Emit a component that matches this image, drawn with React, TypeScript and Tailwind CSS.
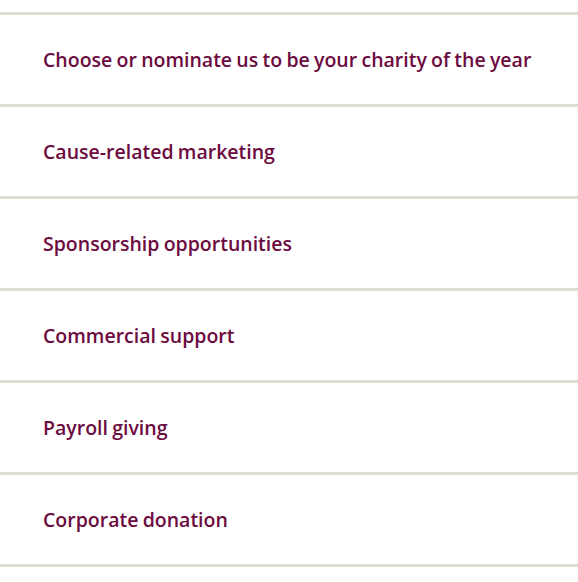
import React from 'react';

const items = [
  'Choose or nominate us to be your charity of the year',
  'Cause-related marketing',
  'Sponsorship opportunities',
  'Commercial support',
  'Payroll giving',
  'Corporate donation',
];

const App: React.FC = () => {
  return (
    <div className="min-h-screen bg-white pt-3" style={{ fontFamily: '"Open Sans", "Noto Sans", sans-serif' }}>
      <ul className="border-b-[3px] border-[#dddecd]">
        {items.map((item) => (
          <li key={item} className="border-t-[3px] border-[#dddecd]">
            <a href="#" className="flex h-[89px] items-center pl-[43px] pt-[1px] text-[19.5px] font-semibold [word-spacing:-0.8px] text-[#6b0b40]">
              {item}
            </a>
          </li>
        ))}
      </ul>
    </div>
  );
};

export default App;
